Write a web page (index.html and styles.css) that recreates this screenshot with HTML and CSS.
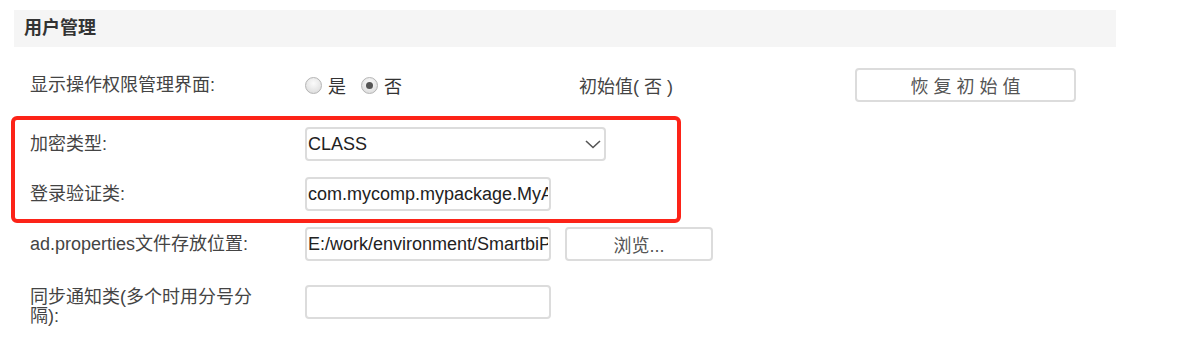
FILE: index.html
```html
<!DOCTYPE html>
<html lang="zh-CN">
<head>
    <meta charset="UTF-8">
    <meta name="viewport" content="width=device-width, initial-scale=1.0">
    <title>用户管理</title>
    <link rel="stylesheet" href="styles.css">
</head>
<body>
    <div class="panel">
        <div class="panel-title">用户管理</div>

        <div class="form">
            <div class="row row-first">
                <span class="field-label">显示操作权限管理界面:</span>
                <div class="radio-group">
                    <label class="radio"><input type="radio" name="showAuth" value="1"><span>是</span></label>
                    <label class="radio"><input type="radio" name="showAuth" value="0" checked><span>否</span></label>
                </div>
                <span class="initial">初始值( 否 )</span>
                <button class="btn btn-reset">恢 复 初 始 值</button>
            </div>

            <div class="highlight">
                <div class="row">
                    <label class="field-label" for="encryptType">加密类型:</label>
                    <div class="select-wrap">
                        <select id="encryptType" class="select">
                            <option selected>CLASS</option>
                            <option>MD5</option>
                        </select>
                        <svg class="select-arrow" width="16" height="9" viewBox="0 0 16 9">
                            <path d="M1 1 L8 7.5 L15 1" fill="none" stroke="#555" stroke-width="1.6"/>
                        </svg>
                    </div>
                </div>
                <div class="row row-gap">
                    <label class="field-label" for="loginClass">登录验证类:</label>
                    <input id="loginClass" class="text-input" type="text" value="com.mycomp.mypackage.MyAuthentication">
                </div>
            </div>

            <div class="row row-ad">
                <label class="field-label" for="adPath">ad.properties文件存放位置:</label>
                <input id="adPath" class="text-input" type="text" value="E:/work/environment/SmartbiPlus/ad.properties">
                <button class="btn btn-browse">浏览...</button>
            </div>

            <div class="row row-sync">
                <label class="field-label field-label-wrap" for="syncClass">同步通知类(多个时用分号分<br>隔):</label>
                <input id="syncClass" class="text-input" type="text" value="">
            </div>
        </div>
    </div>
</body>
</html>
```

FILE: styles.css
```css
body {
    margin: 0;
    background: #fff;
    font-family: "Liberation Sans", "Noto Sans CJK SC", sans-serif;
    font-size: 18px;
    color: #333;
}
.panel {
    width: 1102px;
    padding: 10px 0 0 14px;
}
.panel-title {
    height: 37px;
    line-height: 37px;
    padding-left: 10px;
    background-color: #f5f5f5;
    font-weight: bold;
    color: #333;
}
.form {
    padding-left: 16px;
}
.row {
    display: flex;
    align-items: center;
    min-height: 34px;
}
.row-first {
    margin-top: 21px;
}
.row-gap {
    margin-top: 16px;
}
.row-ad {
    margin-top: 4px;
}
.row-sync {
    margin-top: 24px;
    align-items: flex-start;
}
.field-label {
    width: 275px;
    flex-shrink: 0;
    line-height: 20px;
    color: #444;
}
.field-label-wrap {
    line-height: 19px;
    margin-top: 3px;
}

/* radios */
.radio-group {
    display: flex;
    align-items: center;
    width: 274px;
}
.radio {
    display: flex;
    align-items: center;
    margin-right: 15px;
    color: #333;
}
.radio input {
    appearance: none;
    -webkit-appearance: none;
    width: 17px;
    height: 17px;
    margin: 0 6px 0 0;
    border: 1px solid #b4b4b4;
    border-radius: 50%;
    background: radial-gradient(circle at 50% 35%, #fbfbfb 0%, #e6e6e6 60%, #d6d6d6 100%);
    box-sizing: border-box;
    position: relative;
}
.radio input:checked::after {
    content: "";
    position: absolute;
    left: 4px;
    top: 4px;
    width: 7px;
    height: 7px;
    border-radius: 50%;
    background: #555;
}
.initial {
    width: 276px;
    color: #444;
}

/* controls */
.btn, .text-input, .select {
    box-sizing: border-box;
    height: 34px;
    border: 2px solid #dcdcdc;
    border-radius: 4px;
    background: #fff;
    font-family: inherit;
    font-size: 18px;
}
.btn {
    color: #555;
    padding: 0;
}
.btn-reset {
    width: 221px;
}
.btn-browse {
    width: 148px;
    margin-left: 14px;
}
.text-input {
    width: 246px;
    padding: 0 1px;
    color: #222;
}
.select-wrap {
    position: relative;
}
.select {
    appearance: none;
    -webkit-appearance: none;
    width: 301px;
    padding: 0 1px;
    color: #222;
}
.select-arrow {
    position: absolute;
    right: 5px;
    top: 13px;
    pointer-events: none;
}

/* red annotation box */
.highlight {
    box-sizing: border-box;
    width: 670px;
    margin: 14px 0 0 -19px;
    padding: 7px 0 8px 15px;
    border: 4px solid #fc2318;
    border-radius: 6px;
}
```
